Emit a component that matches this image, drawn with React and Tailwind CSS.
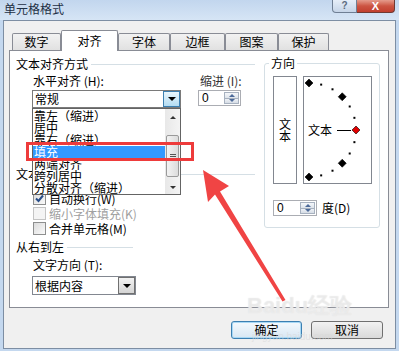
import React from 'react';

const OPTIONS = ['靠左（缩进）', '居中', '靠右（缩进）', '填充', '两端对齐', '跨列居中', '分散对齐（缩进）'];

function GroupHead({ label, w }) {
  return (
    <div className={`flex items-center h-[14px] leading-[14px] ${w}`}>
      <span>{label}</span>
      <div className="flex-1 h-px bg-[#d5dfe5] ml-[3px]" />
    </div>
  );
}

function Spin({ w }) {
  return (
    <div className={`flex h-[16px] border border-[#abadb3] bg-white ${w}`}>
      <span className="flex-1 pl-[3px] leading-[14px] font-['Liberation_Sans',sans-serif]">0</span>
      <div className="w-[15px] flex flex-col m-px border border-[#a7b1bf]">
        <div className="flex-1 flex items-center justify-center bg-gradient-to-b from-[#f5f7fa] to-[#dde3ea] border-b border-[#a7b1bf]">
          <span className="w-0 h-0 border-l-[3px] border-r-[3px] border-b-[3px] border-l-transparent border-r-transparent border-b-[#4d6a99]" />
        </div>
        <div className="flex-1 flex items-center justify-center bg-gradient-to-b from-[#eef1f5] to-[#d6dde6]">
          <span className="w-0 h-0 border-l-[3px] border-r-[3px] border-t-[3px] border-l-transparent border-r-transparent border-t-[#4d6a99]" />
        </div>
      </div>
    </div>
  );
}

function Check({ checked, disabled, label }) {
  return (
    <div className="flex items-center h-[15px] pl-[17px]">
      <span
        className={`w-[13px] h-[13px] border flex items-center justify-center ${
          disabled ? 'border-[#c4c4c4] bg-[#f4f4f4]' : 'border-[#8e8f8f] bg-gradient-to-br from-[#dcdcdc] to-[#fafafa]'
        }`}
      >
        {checked && (
          <svg width="9" height="9" viewBox="0 0 9 9">
            <path d="M1 4.5 L3.5 7 L8 1.5" stroke="#2a4f8a" strokeWidth="2" fill="none" />
          </svg>
        )}
      </span>
      <span className={`ml-[3px] leading-[14px] ${disabled ? 'text-[#a0a0a0]' : 'text-black'}`}>{label}</span>
    </div>
  );
}

function DirectionDial() {
  const pts = [];
  for (let a = 90; a >= -90; a -= 15) {
    const r = (a * Math.PI) / 180;
    pts.push({ a, x: 5 + 47 * Math.cos(r), y: 53 - 47 * Math.sin(r) });
  }
  return (
    <div className="relative w-[69px] h-[108px] border border-[#828790] bg-white">
      <svg className="absolute inset-0" width="67" height="106" viewBox="0 0 67 106">
        <line x1="33" y1="53.5" x2="47" y2="53.5" stroke="#000" strokeWidth="1" />
        {pts.map((p) =>
          p.a % 45 === 0 ? (
            <polygon
              key={p.a}
              points={`${p.x},${p.y - 4} ${p.x + 4},${p.y} ${p.x},${p.y + 4} ${p.x - 4},${p.y}`}
              fill={p.a === 0 ? '#e00000' : '#000'}
              stroke="#000"
              strokeWidth="0.6"
            />
          ) : (
            <rect key={p.a} x={p.x - 1} y={p.y - 1} width="2" height="2" fill="#000" />
          )
        )}
      </svg>
      <span className="absolute left-[4px] top-[47px] leading-[12px]">文本</span>
    </div>
  );
}

export default function App() {
  return (
    <div className="relative w-[399px] h-[351px] overflow-hidden bg-[#c4d8ef] font-['Noto_Sans_CJK_SC',sans-serif] text-[12px] leading-[12px] text-black">
      {/* title bar */}
      <div className="h-[20px] flex items-start justify-between bg-gradient-to-b from-[#c2d6ee] to-[#d6e5f5]">
        <span className="pl-[4px] pt-[3px] text-[#1e2f45]">单元格格式</span>
        <div className="flex mr-[4px]">
          <div className="w-[25px] h-[13px] flex items-center justify-center rounded-bl-[4px] border border-t-0 border-[#6f7f94] bg-gradient-to-b from-[#e6eef8] to-[#c6d5e8] text-[#5c6c80] text-[10px] font-bold font-['Liberation_Sans',sans-serif]">
            ?
          </div>
          <div className="w-[38px] h-[13px] flex items-center justify-center rounded-br-[4px] border border-t-0 border-l-0 border-[#6f3a33] bg-gradient-to-b from-[#e49b8c] via-[#cc5442] to-[#c13f2e] text-white text-[11px] font-bold font-['Liberation_Sans',sans-serif]">
            X
          </div>
        </div>
      </div>

      {/* dialog body */}
      <div className="mx-[3px] h-[329px] border border-[#7d8ea3] bg-[#f0f0f0] flex flex-col">
        {/* tabs */}
        <div className="flex items-end h-[20px] mt-[9px] ml-[8px]">
          <div className="w-[49px] h-[17px] flex items-center justify-center border border-b-0 border-[#898c95] rounded-t-[2px] bg-gradient-to-b from-[#f2f2f2] to-[#e1e1e1]">数字</div>
          <div className="relative z-10 w-[57px] h-[21px] -mb-px flex items-center justify-center border border-b-0 border-[#898c95] rounded-t-[2px] bg-white pb-[1px]">对齐</div>
          <div className="w-[52px] h-[17px] flex items-center justify-center border border-b-0 border-[#898c95] rounded-t-[2px] bg-gradient-to-b from-[#f2f2f2] to-[#e1e1e1]">字体</div>
          <div className="w-[55px] h-[17px] flex items-center justify-center border border-b-0 border-[#898c95] rounded-t-[2px] bg-gradient-to-b from-[#f2f2f2] to-[#e1e1e1]">边框</div>
          <div className="w-[53px] h-[17px] flex items-center justify-center border border-b-0 border-[#898c95] rounded-t-[2px] bg-gradient-to-b from-[#f2f2f2] to-[#e1e1e1]">图案</div>
          <div className="w-[51px] h-[17px] flex items-center justify-center border border-b-0 border-[#898c95] rounded-t-[2px] bg-gradient-to-b from-[#f2f2f2] to-[#e1e1e1]">保护</div>
        </div>

        {/* panel */}
        <div className="relative ml-[5px] w-[380px] h-[258px] border border-[#898c95] bg-white flex">
          {/* left column */}
          <div className="ml-[6px] w-[239px] flex flex-col">
            <div className="mt-[6px]">
              <GroupHead label="文本对齐方式" w="w-[239px]" />
            </div>
            <div className="flex h-[14px] mt-[3px] leading-[14px]">
              <span className="w-[184px] pl-[17px]">水平对齐 (H):</span>
              <span className="text-[#333]">缩进 (I):</span>
            </div>
            <div className="flex items-start mt-[2px] h-[18px]">
              <div className="ml-[16px] w-[149px] h-[18px] flex border border-[#7a7a7a] bg-white">
                <span className="flex-1 pl-[2px] leading-[16px]">常规</span>
                <div className="w-[17px] h-[16px] flex items-center justify-center border border-[#3c7fb1] bg-gradient-to-b from-[#e8f5fc] to-[#b3dcf2]">
                  <span className="w-0 h-0 border-l-[4px] border-r-[4px] border-t-[4px] border-l-transparent border-r-transparent border-t-black" />
                </div>
              </div>
              <div className="ml-[17px]">
                <Spin w="w-[43px]" />
              </div>
            </div>
            <div className="mt-[59px]">
              <GroupHead label="文本控制" w="w-[239px]" />
            </div>
            <div className="mt-[10px] flex flex-col">
              <Check checked label="自动换行(W)" />
              <Check disabled label="缩小字体填充(K)" />
              <Check label="合并单元格(M)" />
            </div>
            <div className="mt-[4px]">
              <GroupHead label="从右到左" w="w-[117px]" />
            </div>
            <div className="mt-[4px] pl-[17px] h-[14px] leading-[14px]">文字方向 (T):</div>
            <div className="mt-[4px] ml-[16px] w-[104px] h-[19px] flex border border-[#828790] bg-white">
              <span className="flex-1 pl-[2px] leading-[17px]">根据内容</span>
              <div className="w-[17px] h-[17px] flex items-center justify-center border border-[#707070] bg-gradient-to-b from-[#f2f2f2] to-[#d4d4d4]">
                <span className="w-0 h-0 border-l-[4px] border-r-[4px] border-t-[4px] border-l-transparent border-r-transparent border-t-black" />
              </div>
            </div>
          </div>

          {/* right column */}
          <div className="ml-[9px] w-[116px]">
            <div className="relative mt-[12px] h-[165px] border border-[#d5dfe5] rounded-[3px] flex flex-col">
              <span className="absolute left-[4px] -top-[7px] px-[2px] bg-white leading-[12px]">方向</span>
              <div className="flex mt-[12px]">
                <div className="ml-[8px] w-[24px] h-[108px] border border-[#828790] flex flex-col items-center justify-center leading-[12px]">
                  <span>文</span>
                  <span>本</span>
                </div>
                <div className="ml-[6px]">
                  <DirectionDial />
                </div>
              </div>
              <div className="flex items-center mt-[16px] ml-[8px]">
                <Spin w="w-[44px]" />
                <span className="ml-[5px]">度(D)</span>
              </div>
            </div>
          </div>

          {/* open dropdown list */}
          <div className="absolute left-[22px] top-[57px] w-[149px] h-[87px] z-10 flex border border-[#646464] bg-white overflow-hidden">
            <div className="w-[132px] flex flex-col pt-px">
              {OPTIONS.map((o) => (
                <div
                  key={o}
                  className={`h-[12px] leading-[12px] pl-[1px] ${o === '填充' ? 'bg-[#3399ff] text-white' : ''}`}
                >
                  {o}
                </div>
              ))}
            </div>
            <div className="w-[15px] flex flex-col bg-gradient-to-r from-[#e8e8e8] to-[#f4f4f4]">
              <div className="h-[17px] flex items-center justify-center">
                <span className="w-0 h-0 border-l-[3px] border-r-[3px] border-b-[3px] border-l-transparent border-r-transparent border-b-[#333]" />
              </div>
              <div className="mt-[9px] h-[42px] mx-px rounded-[2px] border border-[#9a9a9a] bg-gradient-to-r from-[#f3f3f3] to-[#dcdcdc] flex flex-col items-center justify-center gap-[1px]">
                <span className="w-[6px] h-px bg-[#555]" />
                <span className="w-[6px] h-px bg-[#555]" />
                <span className="w-[6px] h-px bg-[#555]" />
              </div>
              <div className="flex-1 flex items-end justify-center pb-[5px]">
                <span className="w-0 h-0 border-l-[3px] border-r-[3px] border-t-[3px] border-l-transparent border-r-transparent border-t-[#333]" />
              </div>
            </div>
          </div>
        </div>

        {/* buttons */}
        <div className="flex justify-end gap-[9px] mt-[13px] pr-[12px]">
          <button className="w-[71px] h-[18px] rounded-[3px] border border-[#3c7fb1] bg-gradient-to-b from-[#f4f9fd] to-[#d8e7f3] leading-[16px] shadow-[inset_0_0_0_1px_#a8d8f5]">
            确定
          </button>
          <button className="w-[72px] h-[18px] rounded-[3px] border border-[#707070] bg-gradient-to-b from-[#f2f2f2] to-[#d9d9d9] leading-[16px]">
            取消
          </button>
        </div>
      </div>

      {/* baidu watermark */}
      <div className="absolute left-[247px] top-[294px] text-[22px] leading-[24px] text-white/40 font-['Liberation_Sans',sans-serif] font-bold pointer-events-none [text-shadow:0_0_1px_#dddddd]">
        Baidu经验
      </div>
      <div className="absolute left-[252px] top-[332px] text-[10px] leading-[10px] text-[#d8d8d8]/60 font-['Liberation_Sans',sans-serif] pointer-events-none">
        jingyan.baidu.com
      </div>

      {/* red highlight box */}
      <div className="absolute left-[26px] top-[142px] w-[168px] h-[19px] border-[3px] border-[#ee3b3b] pointer-events-none z-20" />

      {/* red arrow */}
      <svg className="absolute inset-0 pointer-events-none z-20" width="399" height="351" viewBox="0 0 399 351">
        <polygon
          points="203,170 229,186 220,191.5 285.5,300 282.5,301.5 215,194.5 208,202"
          fill="#f04444"
        />
      </svg>
    </div>
  );
}
